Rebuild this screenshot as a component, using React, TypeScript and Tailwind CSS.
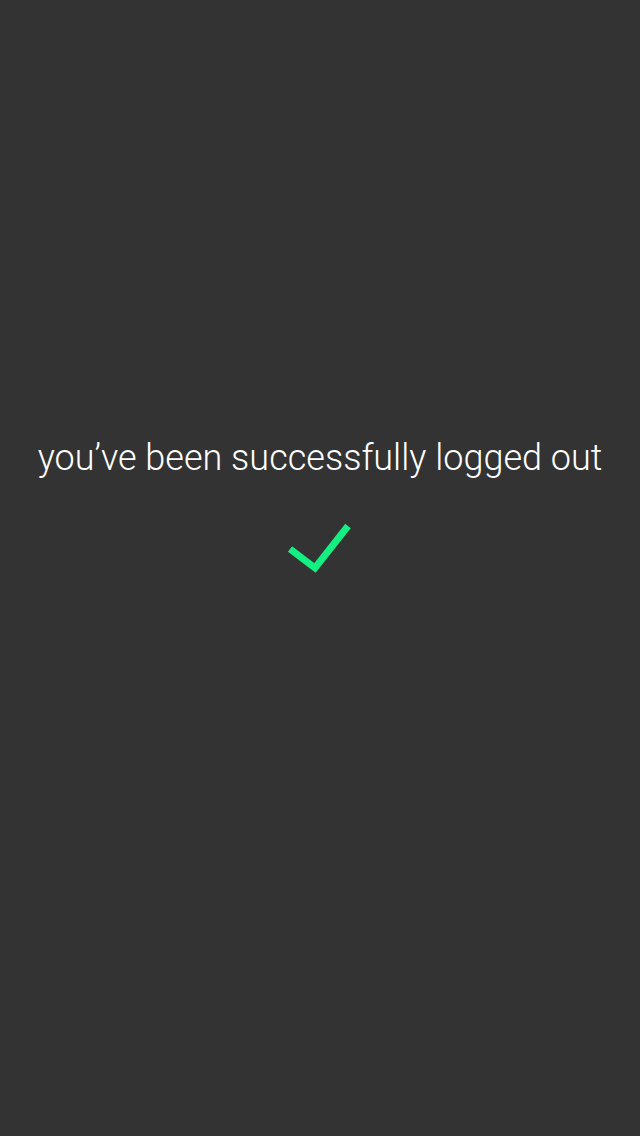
export default function App() {
  return (
    <div className="w-[640px] h-[1136px] bg-[#333333] flex flex-col items-center pt-[434px]" style={{ fontFamily: "Roboto, sans-serif" }}>
      <p className="text-white font-light text-[36px] leading-[48px] tracking-[0px]">you’ve been successfully logged out</p>
      <svg className="mt-[38px]" width="70" height="60" viewBox="0 0 70 60">
        <polyline points="5,29 30,48 63,6" fill="none" stroke="#14ef82" strokeWidth="7" strokeLinecap="butt" strokeLinejoin="miter" />
      </svg>
    </div>
  );
}
